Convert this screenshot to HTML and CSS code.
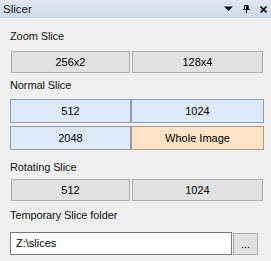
FILE: index.html
```html
<!DOCTYPE html>
<html lang="en">
<head>
<meta charset="utf-8">
<title>Slicer</title>
<link rel="stylesheet" href="styles.css">
</head>
<body>

<div class="dock">
  <div class="titlebar">
    <span class="title">Slicer</span>
    <span class="tools">
      <svg class="ico" width="9" height="6" viewBox="0 0 9 6"><path d="M0 0.5h9L4.5 5z" fill="#111"/></svg>
      <svg class="ico" width="7" height="8" viewBox="0 0 7 8"><path d="M1.5 0.5h3.5v4h-3.5z M3.5 0.5v4 M0 4.5h7 M3.5 4.5v3.5" fill="none" stroke="#111" stroke-width="1"/><path d="M4 0.5h1.5v4H4z" fill="#111"/></svg>
      <svg class="ico" width="7" height="7" viewBox="0 0 7 7"><path d="M0.5 0.5l6 6M6.5 0.5l-6 6" stroke="#111" stroke-width="1.6"/></svg>
    </span>
  </div>

  <div class="content">
    <div class="label l-zoom">Zoom Slice</div>
    <div class="grid">
      <button class="btn grey">256x2</button>
      <button class="btn grey">128x4</button>
    </div>

    <div class="label l-normal">Normal Slice</div>
    <div class="grid rows">
      <button class="btn blue">512</button>
      <button class="btn blue">1024</button>
      <button class="btn blue">2048</button>
      <button class="btn peach">Whole Image</button>
    </div>

    <div class="label l-rot">Rotating Slice</div>
    <div class="grid">
      <button class="btn grey">512</button>
      <button class="btn grey">1024</button>
    </div>

    <div class="label l-temp">Temporary Slice folder</div>
    <div class="pathrow">
      <div class="field">Z:\slices</div>
      <button class="btn grey browse">...</button>
    </div>
  </div>
</div>

</body>
</html>
```

FILE: styles.css
```css
html, body {
margin: 0;
padding: 0;
}

body {
background: #f0f0f0;
color: #000;
font-family: "Liberation Sans", Arial, sans-serif;
font-size: 11px;
width: 271px;
height: 261px;
overflow: hidden;
}

.titlebar {
height: 18px;
display: flex;
align-items: center;
justify-content: space-between;
background: linear-gradient(#dfe8f2, #cad8e7);
padding: 0 4px 0 3px;
}

.title {
font-size: 11.5px;
color: #111;
}

.tools {
display: flex;
align-items: center;
gap: 10px;
}

.ico {
display: block;
}

.content {
padding: 0 7px 0 10px;
}

.label {
height: 14px;
line-height: 14px;
color: #111;
letter-spacing: -0.1px;
}

.l-zoom { margin-top: 11px; margin-bottom: 7px; }
.l-normal { margin-top: 4px; margin-bottom: 7px; }
.l-rot { margin-top: 10px; margin-bottom: 4px; }
.l-temp { margin-top: 6px; margin-bottom: 10px; }

.grid {
display: grid;
grid-template-columns: 121px 133px;
}

.grid.rows {
row-gap: 3px;
}

.btn {
font: inherit;
color: #000;
padding: 0;
margin: 0;
height: 24px;
border: 1px solid #adadad;
background: #e1e1e1;
cursor: pointer;
}

.grey {
height: 22px;
margin: 1px;
}

.blue {
background: #dce9f7;
border-color: #8f9db0;
}

.peach {
background: #fde4c8;
border-color: #b09a82;
}

.pathrow {
display: flex;
align-items: center;
}

.field {
width: 215px;
height: 21px;
line-height: 21px;
padding-left: 5px;
border: 1px solid #7a7a7a;
background: #fff;
}

.browse {
width: 25px;
margin: 0 0 0 1px;
height: 22px;
line-height: 14px;
}
```
